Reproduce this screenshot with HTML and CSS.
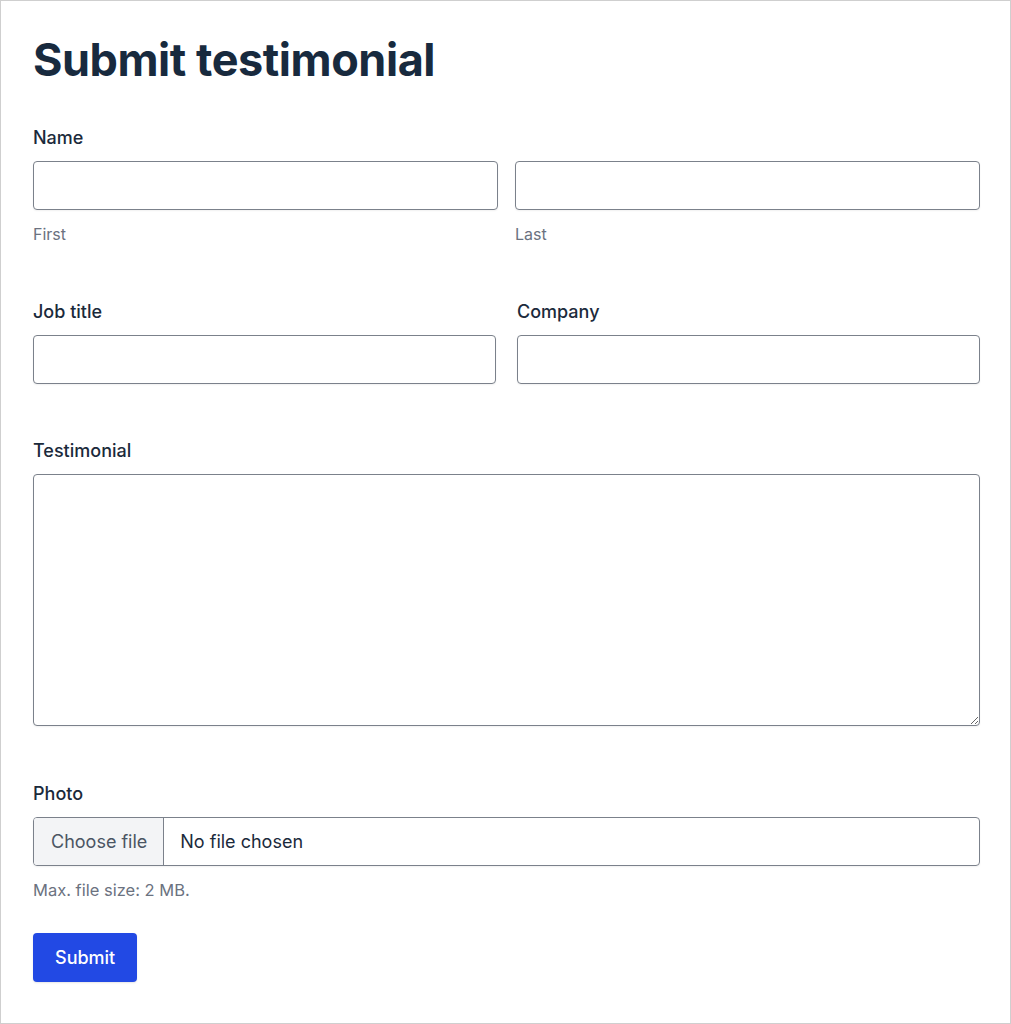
FILE: index.html
```html
<!DOCTYPE html>
<html lang="en">
<head>
  <meta charset="UTF-8">
  <title>Submit testimonial</title>
  <link rel="stylesheet" href="styles.css">
</head>
<body>
  <div class="frame">
    <h1 class="title">Submit testimonial</h1>
    <form class="form" onsubmit="return false">
      <div class="field field-name">
        <div class="label">Name</div>
        <div class="row row-name">
          <div class="sub">
            <input class="input" type="text">
            <div class="hint">First</div>
          </div>
          <div class="sub">
            <input class="input" type="text">
            <div class="hint">Last</div>
          </div>
        </div>
      </div>

      <div class="row row-job">
        <div class="field">
          <label class="label">Job title</label>
          <input class="input" type="text">
        </div>
        <div class="field">
          <label class="label">Company</label>
          <input class="input" type="text">
        </div>
      </div>

      <div class="field field-text">
        <label class="label">Testimonial</label>
        <textarea class="input textarea"></textarea>
      </div>

      <div class="field field-photo">
        <div class="label">Photo</div>
        <label class="file">
          <input type="file" class="file-hidden">
          <span class="file-btn">Choose file</span>
          <span class="file-name">No file chosen</span>
        </label>
        <div class="hint hint-file">Max. file size: 2 MB.</div>
      </div>

      <button class="submit" type="submit">Submit</button>
    </form>
  </div>
</body>
</html>
```

FILE: styles.css
```css
* {
  box-sizing: border-box;
}
body {
  margin: 0;
  background: #fff;
  font-family: 'Inter', 'Liberation Sans', sans-serif;
  color: #1b2a3b;
}
.frame {
  width: 1011px;
  height: 1024px;
  border: 1px solid #cfcfcf;
  padding: 32px 30px 0 32px;
}
.title {
  margin: 0 0 37px;
  font-size: 45px;
  line-height: 54px;
  font-weight: 700;
  letter-spacing: -0.01em;
  color: #182a3e;
}
.field {
  margin-bottom: 53px;
}
.field-name {
  margin-bottom: 52px;
}
.field-text {
  margin-bottom: 54px;
}
.field-photo {
  margin-bottom: 31px;
}
.row .field {
  margin-bottom: 0;
}
.row-job {
  margin-bottom: 53px;
}
.label {
  display: block;
  font-size: 18px;
  line-height: 27px;
  font-weight: 500;
  margin-bottom: 10px;
}
.row {
  display: grid;
  grid-template-columns: 1fr 1fr;
}
.row-name {
  gap: 17px;
}
.row-job {
  gap: 21px;
}
.input {
  display: block;
  width: 100%;
  height: 49px;
  border: 1px solid #7b818b;
  border-radius: 4px;
  background: #fff;
  box-shadow: 0 1px 2px rgba(0, 0, 0, 0.06);
  font: inherit;
  font-size: 17px;
  padding: 0 14px;
  outline: none;
}
.textarea {
  height: 252px;
  padding: 12px 14px;
  resize: vertical;
}
.hint {
  margin-top: 12px;
  font-size: 16px;
  line-height: 24px;
  color: #6b7280;
}
.file {
  display: flex;
  height: 49px;
  border: 1px solid #7b818b;
  border-radius: 4px;
  overflow: hidden;
  box-shadow: 0 1px 2px rgba(0, 0, 0, 0.06);
  cursor: pointer;
}
.file-hidden {
  display: none;
}
.file-btn {
  display: flex;
  align-items: center;
  padding: 0 16px 0 17px;
  background: #f3f4f6;
  border-right: 1px solid #7b818b;
  color: #4b5563;
  font-size: 18px;
}
.file-name {
  display: flex;
  align-items: center;
  padding-left: 16px;
  font-size: 18px;
  color: #1b2a3b;
}
.hint-file {
  margin-top: 12px;
  font-size: 16.5px;
}
.submit {
  height: 49px;
  padding: 0 22px;
  border: none;
  border-radius: 4px;
  background: #2249e4;
  color: #fff;
  font: inherit;
  font-size: 18px;
  font-weight: 500;
  box-shadow: 0 1px 2px rgba(0, 0, 0, 0.1);
  cursor: pointer;
}
```
